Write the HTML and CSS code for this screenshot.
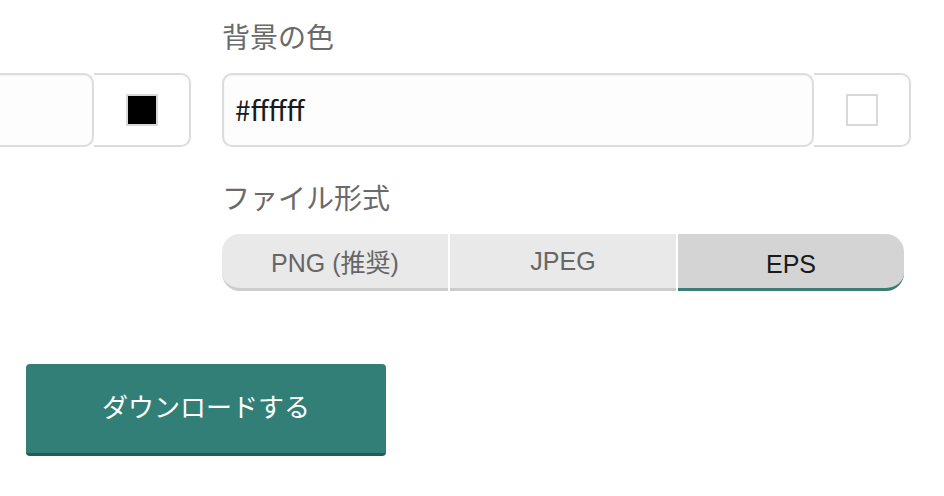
FILE: index.html
```html
<!DOCTYPE html>
<html lang="ja">
<head>
<meta charset="utf-8">
<title>ダウンロード</title>
<link rel="stylesheet" href="styles.css">
</head>
<body>
<div class="page">
  <div class="color-row">
    <div class="field">
      <div class="label label-empty"></div>
      <div class="picker">
        <div class="hex-input"></div>
        <div class="swatch-box"><span class="swatch swatch-black"></span></div>
      </div>
    </div>
    <div class="field">
      <div class="label">背景の色</div>
      <div class="picker">
        <div class="hex-input">#ffffff</div>
        <div class="swatch-box"><span class="swatch swatch-white"></span></div>
      </div>
    </div>
  </div>
  <div class="format-section">
    <div class="label">ファイル形式</div>
    <div class="segmented">
      <div class="seg seg-first">PNG (推奨)</div>
      <div class="seg">JPEG</div>
      <div class="seg seg-last seg-active">EPS</div>
    </div>
  </div>
  <div class="actions">
    <button class="download">ダウンロードする</button>
  </div>
</div>
</body>
</html>
```
FILE: styles.css
```css
html, body {
  margin: 0;
  padding: 0;
  background: #ffffff;
  overflow: hidden;
}
body {
  font-family: "Noto Sans CJK JP", "Noto Sans", sans-serif;
  color: #222;
}
.page {
  width: 944px;
  height: 496px;
}
.color-row {
  display: flex;
  gap: 31px;
  margin-left: -498px;
  padding-top: 16px;
}
.field {
  width: 689px;
  flex: none;
}
.label {
  font-size: 28px;
  line-height: 40px;
  height: 40px;
  color: #6a6a6a;
  margin-bottom: 17px;
}
.picker {
  display: flex;
  height: 74px;
}
.hex-input {
  flex: 1;
  box-sizing: border-box;
  border: 2px solid #dcdcdc;
  border-radius: 10px;
  background: #fdfdfd;
  box-shadow: inset 0 1px 2px rgba(0,0,0,0.05);
  padding-left: 11px;
  font-size: 28px;
  line-height: 68px;
  color: #1a1a1a;
}
.swatch-box {
  width: 97px;
  box-sizing: border-box;
  border: 2px solid #dcdcdc;
  border-left: none;
  border-radius: 0 10px 10px 0;
  display: flex;
  align-items: center;
  justify-content: center;
  background: #fff;
}
.swatch {
  width: 32px;
  height: 32px;
  box-sizing: border-box;
  border: 2px solid #d8d8d8;
}
.swatch-black { background: #000; }
.swatch-white { background: #fff; }
.format-section {
  margin-left: 222px;
  margin-top: 30px;
  width: 682px;
}
.segmented {
  display: flex;
  gap: 2px;
  height: 57px;
}
.seg {
  flex: 1;
  box-sizing: border-box;
  background: #e9e9e9;
  border-bottom: 3px solid #cccccc;
  display: flex;
  align-items: center;
  justify-content: center;
  font-family: "Liberation Sans", "Noto Sans CJK JP", sans-serif;
  font-size: 25px;
  color: #666;
}
.seg-first { border-radius: 18px 0 0 18px; }
.seg-last { border-radius: 0 18px 18px 0; }
.seg-active {
  background: #d4d4d4;
  border-bottom-color: #3b7c73;
  color: #1a1a1a;
  padding-top: 7px;
}
.actions {
  margin-top: 73px;
  padding-left: 26px;
}
.download {
  width: 360px;
  height: 92px;
  box-sizing: border-box;
  border: none;
  border-bottom: 3px solid #1c5f57;
  border-radius: 4px;
  background: #327f77;
  color: #fff;
  font-family: "Noto Sans CJK JP", sans-serif;
  font-size: 26px;
  padding: 0 0 6px 0;
  cursor: pointer;
}
```
